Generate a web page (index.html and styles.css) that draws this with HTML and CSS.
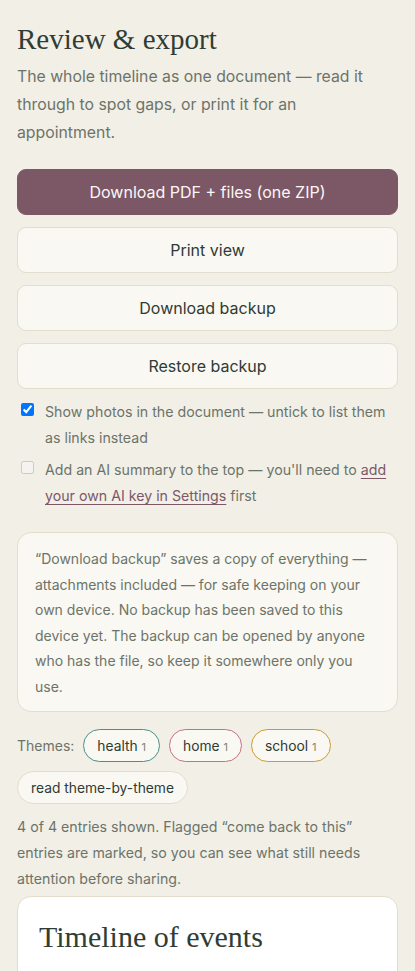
FILE: index.html
```html
<!DOCTYPE html>
<html lang="en">
<head>
<meta charset="utf-8">
<meta name="viewport" content="width=device-width, initial-scale=1">
<title>Review &amp; export</title>
<link rel="stylesheet" href="styles.css">
</head>
<body>
<main class="page">
  <h1 class="title">Review &amp; export</h1>
  <p class="lead">The whole timeline as one document — read it through to spot gaps, or print it for an appointment.</p>

  <div class="actions">
    <button class="btn btn-primary" type="button">Download PDF + files (one ZIP)</button>
    <button class="btn" type="button">Print view</button>
    <button class="btn" type="button">Download backup</button>
    <button class="btn" type="button">Restore backup</button>
  </div>

  <div class="options">
    <label class="option">
      <input type="checkbox" checked>
      <span>Show photos in the document — untick to list them as links instead</span>
    </label>
    <label class="option">
      <input type="checkbox" disabled>
      <span>Add an AI summary to the top — you'll need to <a href="#" class="link">add your own AI key in Settings</a> first</span>
    </label>
  </div>

  <div class="note">
    “Download backup” saves a copy of everything — attachments included — for safe keeping on your own device. No backup has been saved to this device yet. The backup can be opened by anyone who has the file, so keep it somewhere only you use.
  </div>

  <div class="themes">
    <span class="themes-label">Themes:</span>
    <button class="chip chip-health" type="button">health <span class="count">1</span></button>
    <button class="chip chip-home" type="button">home <span class="count">1</span></button>
    <button class="chip chip-school" type="button">school <span class="count">1</span></button>
    <button class="chip" type="button">read theme-by-theme</button>
  </div>

  <p class="summary">4 of 4 entries shown. Flagged “come back to this” entries are marked, so you can see what still needs attention before sharing.</p>

  <section class="doc">
    <h2 class="doc-title">Timeline of events</h2>
    <p class="doc-sub">Prepared from 4 entries, oldest first</p>
  </section>
</main>
</body>
</html>
```

FILE: styles.css
```css
* { box-sizing: border-box; }

html, body {
  margin: 0;
  background: #f2efe7;
}

body {
  font-family: Inter, "Noto Sans", "Liberation Sans", sans-serif;
  color: #2f3b34;
}

.page {
  padding: 22px 17px 40px;
}

.title {
  margin: 0;
  font-family: "Liberation Serif", "Times New Roman", serif;
  font-weight: 400;
  font-size: 29px;
  line-height: 34px;
  color: #2f3d35;
}

.lead {
  margin: 7px 0 0;
  font-size: 15.8px;
  line-height: 28px;
  color: #6c7469;
}

.actions {
  margin-top: 22px;
  display: flex;
  flex-direction: column;
  gap: 12px;
}

.btn {
  height: 46px;
  width: 100%;
  border: 1px solid #e2ddcd;
  border-radius: 9px;
  background: #faf8f2;
  font-family: inherit;
  font-size: 16px;
  color: #2f3b34;
  cursor: pointer;
}

.btn-primary {
  background: #7c5867;
  border-color: #7c5867;
  color: #fbf7f6;
}

.options {
  margin-top: 10px;
  display: flex;
  flex-direction: column;
  gap: 6px;
}

.option {
  display: flex;
  align-items: flex-start;
  gap: 11px;
  padding-left: 4px;
  font-size: 14.2px;
  line-height: 26px;
  color: #6c7469;
}

.option input {
  margin: 4px 0 0;
  width: 13px;
  height: 13px;
  flex: none;
}

.link {
  color: #7c5867;
  text-decoration: underline;
  text-underline-offset: 3px;
}

.note {
  margin-top: 23px;
  padding: 13px 17px 12px;
  background: #faf8f2;
  border: 1px solid #e2ddcd;
  border-radius: 14px;
  font-size: 14px;
  line-height: 25.5px;
  color: #6c7469;
}

.themes {
  margin-top: 17px;
  display: flex;
  flex-wrap: wrap;
  align-items: center;
  gap: 9px 9px;
}

.themes-label {
  font-size: 14px;
  color: #6c7469;
}

.chip {
  height: 33px;
  padding: 0 13px;
  border: 1px solid #e2ddcd;
  border-radius: 999px;
  background: #faf8f2;
  font-family: inherit;
  font-size: 13.8px;
  color: #2f3b34;
  cursor: pointer;
}

.chip .count {
  font-size: 11px;
  color: #7d847a;
}

.chip-health { border-color: #4c8f88; }
.chip-home { border-color: #c17482; }
.chip-school { border-color: #c99c36; }

.summary {
  margin: 10px 0 0;
  font-size: 14.2px;
  line-height: 26px;
  color: #6c7469;
}

.doc {
  margin-top: 4px;
  padding: 22px 21px;
  background: #ffffff;
  border: 1px solid #e2ddcd;
  border-radius: 14px;
}

.doc-title {
  margin: 0;
  font-family: "Liberation Serif", "Times New Roman", serif;
  font-weight: 400;
  font-size: 30px;
  line-height: 36px;
  color: #2f3d35;
}

.doc-sub {
  margin: 15px 0 0;
  font-size: 14px;
  line-height: 22px;
  color: #6c7469;
}
```
